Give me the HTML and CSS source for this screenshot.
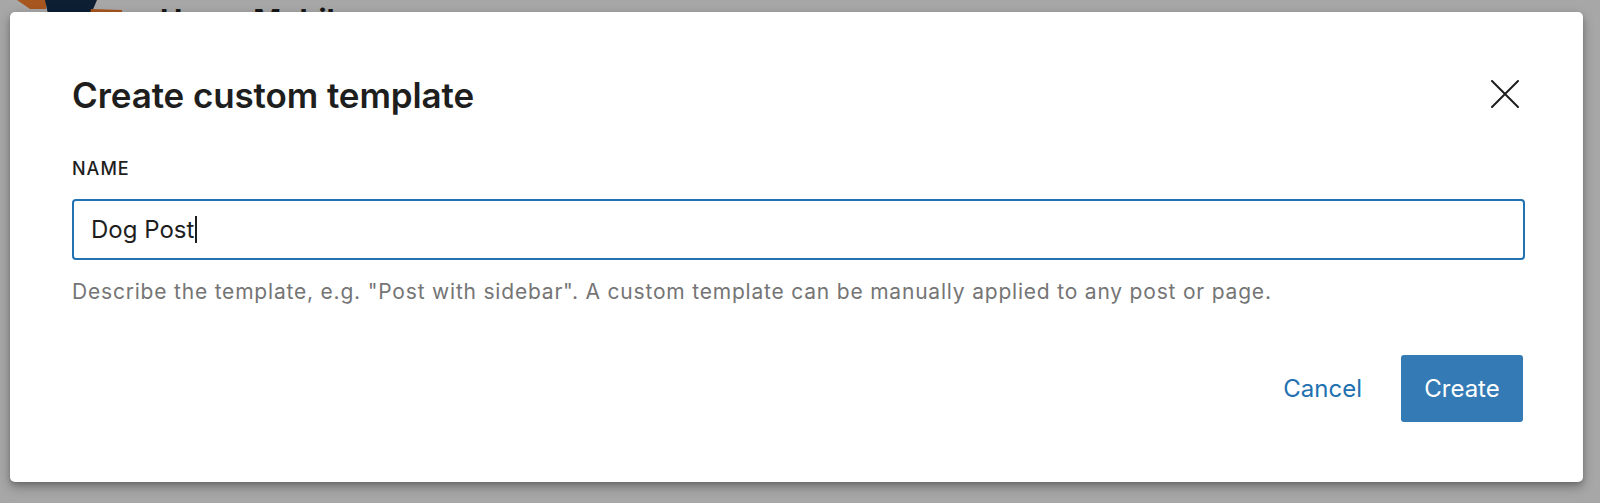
FILE: index.html
```html
<!DOCTYPE html>
<html lang="en">
<head>
<meta charset="utf-8">
<title>Create custom template</title>
<link rel="stylesheet" href="styles.css">
</head>
<body>
<div class="backdrop-page">
  <svg class="site-logo" viewBox="0 0 130 14" width="130" height="14" aria-hidden="true">
    <polygon points="17,0 46,0 46,9 30,9" fill="#ff8430"/>
    <polygon points="45,0 97,0 91,14 48,14" fill="#13304f"/>
    <polygon points="91,9 122,10 122,14 90,14" fill="#ff8430"/>
  </svg>
  <div class="site-title">Home Mobile</div>
</div>
<div class="overlay"></div>
<div class="modal" role="dialog" aria-labelledby="modal-title">
  <div class="modal-header">
    <h1 id="modal-title" class="modal-title">Create custom template</h1>
    <button class="close-btn" aria-label="Close">
      <svg viewBox="0 0 28 28" width="28" height="28" aria-hidden="true"><path d="M1 1 L27 27 M27 1 L1 27" stroke="#1e1e1e" stroke-width="2" fill="none" stroke-linecap="round"/></svg>
    </button>
  </div>
  <div class="field">
    <label class="field-label" for="name">Name</label>
    <div class="input"><span class="input-text">Dog Post</span><span class="caret"></span></div>
    <p class="help">Describe the template, e.g. "Post with sidebar". A custom template can be manually applied to any post or page.</p>
  </div>
  <div class="actions">
    <button class="btn-tertiary">Cancel</button>
    <button class="btn-primary">Create</button>
  </div>
</div>
</body>
</html>
```
FILE: styles.css
```css
html, body {
  margin: 0;
  padding: 0;
}
body {
  width: 1600px;
  height: 503px;
  overflow: hidden;
  position: relative;
  background: #ffffff;
  font-family: "Inter", "Noto Sans", sans-serif;
  color: #1e1e1e;
}
.backdrop-page {
  position: absolute;
  left: 0;
  top: 0;
  width: 1600px;
  height: 503px;
}
.site-logo {
  position: absolute;
  left: 0;
  top: 0;
}
.site-title {
  position: absolute;
  left: 160px;
  top: 5px;
  font-size: 30px;
  line-height: 30px;
  font-weight: 700;
  color: #262626;
  white-space: nowrap;
}
.overlay {
  position: absolute;
  inset: 0;
  background: rgba(0, 0, 0, 0.345);
}
.modal {
  position: absolute;
  left: 10px;
  top: 12px;
  width: 1573px;
  height: 470px;
  box-sizing: border-box;
  background: #ffffff;
  border-radius: 5px;
  box-shadow: 0 5px 12px rgba(0, 0, 0, 0.3), 0 2px 4px rgba(0, 0, 0, 0.15);
  padding: 62px 58px 0 62px;
  display: flex;
  flex-direction: column;
}
.modal-header {
  display: flex;
  align-items: center;
  justify-content: space-between;
  height: 42px;
}
.modal-title {
  margin: 0;
  font-size: 35px;
  font-weight: 600;
  line-height: 42px;
  color: #1e1e1e;
  letter-spacing: -0.1px;
}
.close-btn {
  background: none;
  border: 0;
  padding: 0;
  margin-right: 6px;
  margin-top: -2px;
  width: 28px;
  height: 28px;
  display: flex;
}
.field {
  margin-top: 41px;
}
.field-label {
  display: block;
  font-size: 18px;
  font-weight: 500;
  text-transform: uppercase;
  line-height: 24px;
  color: #1e1e1e;
  letter-spacing: 1px;
}
.input {
  margin-top: 18px;
  height: 61px;
  box-sizing: border-box;
  border: 2px solid #2271b1;
  border-radius: 4px;
  display: flex;
  align-items: center;
  padding-left: 17px;
}
.input-text {
  font-size: 24px;
  color: #1e1e1e;
}
.caret {
  display: inline-block;
  width: 1.5px;
  height: 27px;
  background: #1e1e1e;
  margin-left: 1px;
}
.help {
  margin: 18px 0 0 0;
  font-size: 21px;
  line-height: 28px;
  color: #757575;
  letter-spacing: 0.8px;
  white-space: nowrap;
}
.actions {
  margin-top: 49px;
  display: flex;
  justify-content: flex-end;
  align-items: center;
  gap: 39px;
  padding-right: 2px;
}
.btn-tertiary {
  background: none;
  border: 0;
  padding: 0;
  font-family: inherit;
  font-size: 24px;
  color: #2271b1;
}
.btn-primary {
  font-family: inherit;
  font-size: 24px;
  color: #ffffff;
  background: #347bb5;
  border: 0;
  border-radius: 3px;
  width: 122px;
  height: 67px;
}
```
